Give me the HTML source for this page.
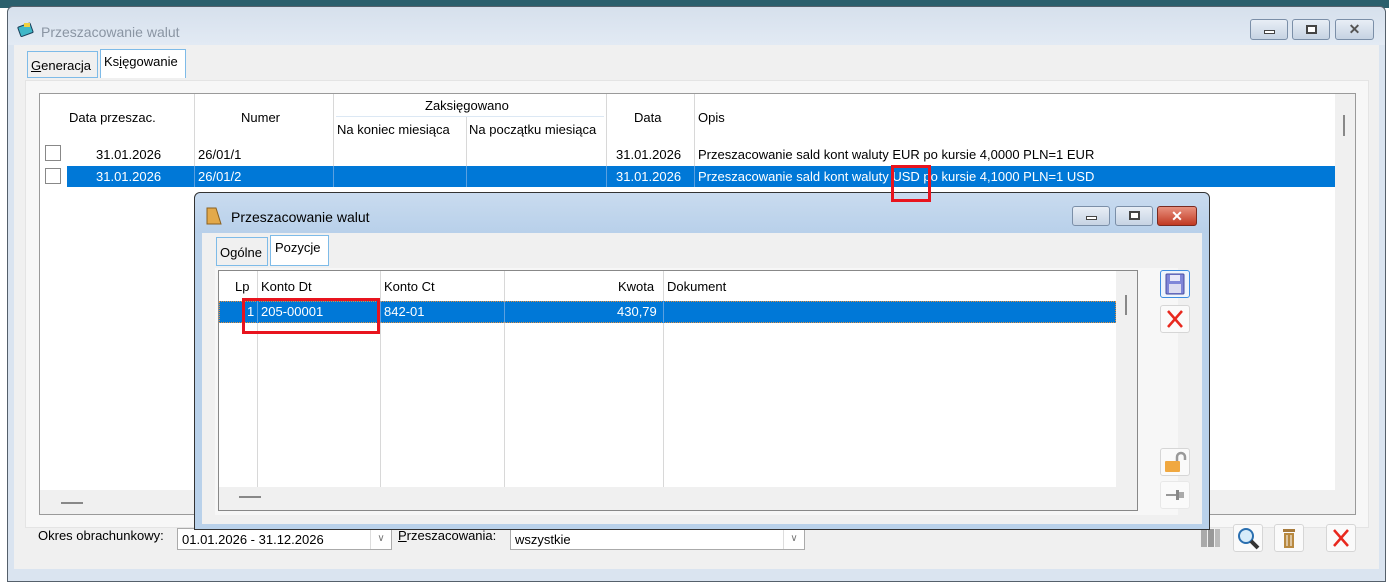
<!DOCTYPE html>
<html><head><meta charset="utf-8"><style>
*{margin:0;padding:0;box-sizing:border-box}
body{width:1389px;height:584px;overflow:hidden;background:#fff;font-family:"Liberation Sans",sans-serif;font-size:13px;color:#000;position:relative}
.a{position:absolute}
.t{position:absolute;white-space:nowrap;line-height:16px}
.vl{position:absolute;width:1px;background:#d8d8d8}
.sel{background:#0078d7;color:#fff}
.btn{position:absolute;border:1px solid #7b8fa8;border-radius:3px;background:linear-gradient(#e8eef6,#c6d3e3)}
.ib{position:absolute;width:30px;height:28px;border:1px solid #d6d6d6;border-radius:3px;background:#fafafa}
</style></head><body>
<div class="a" style="left:0;top:0;width:1389px;height:8px;background:#2b5f6c"></div>
<div class="a" style="left:7px;top:6px;width:1379px;height:576px;border:1px solid #55606b;border-radius:6px 6px 0 0;background:#dae4f0"></div>
<div class="a" style="left:8px;top:7px;width:1377px;height:38px;border-radius:6px 6px 0 0;background:linear-gradient(#d6e0ec,#e2eaf4)"></div>
<svg class="a" style="left:17px;top:22px" width="18" height="16"><rect x="2" y="3" width="13" height="10" rx="1" fill="#3fb7c8" stroke="#1a3f5a" transform="rotate(-20 8 8)"/><rect x="7" y="1" width="6" height="4" fill="#f0d040"/></svg>
<div class="t" style="left:41px;top:24px;color:#8a95a3;font-size:14px">Przeszacowanie walut</div>
<div class="btn" style="left:1250px;top:19px;width:38px;height:21px"><div class="a" style="left:13px;top:10px;width:11px;height:4px;border:1px solid #444;background:#fff"></div></div>
<div class="btn" style="left:1292px;top:19px;width:38px;height:21px"><div class="a" style="left:13px;top:5px;width:11px;height:9px;border:2px solid #444;background:#fff"></div></div>
<div class="btn" style="left:1335px;top:19px;width:39px;height:21px;text-align:center;font-weight:bold;color:#555;line-height:19px;font-size:14px">✕</div>
<div class="a" style="left:14px;top:45px;width:1365px;height:524px;background:#f0f0f0"></div>
<div class="a" style="left:25px;top:80px;width:1344px;height:448px;background:#f7f7f7;border:1px solid #e4e4e4"></div>
<div class="a" style="left:27px;top:51px;width:71px;height:27px;border:1px solid #7ebbe8;background:#f0f0f0"></div>
<div class="t" style="left:31px;top:58px"><u>G</u>eneracja</div>
<div class="a" style="left:100px;top:49px;width:86px;height:29px;border:1px solid #7ebbe8;border-bottom:none;background:#fff"></div>
<div class="t" style="left:104px;top:54px">Ks<u>i</u>ęgowanie</div>
<div class="a" style="left:39px;top:93px;width:1317px;height:422px;border:1px solid #9a9a9a;background:#fff"></div>
<div class="a" style="left:40px;top:490px;width:1295px;height:24px;background:#f0f0f0"></div>
<div class="a" style="left:61px;top:502px;width:22px;height:2px;background:#888"></div>
<div class="a" style="left:1335px;top:94px;width:20px;height:420px;background:#f0f0f0"></div>
<div class="a" style="left:1343px;top:115px;width:2px;height:21px;background:#888"></div>
<div class="vl" style="left:194px;top:94px;height:93px"></div>
<div class="vl" style="left:333px;top:94px;height:93px"></div>
<div class="vl" style="left:466px;top:116px;height:71px"></div>
<div class="vl" style="left:606px;top:94px;height:93px"></div>
<div class="vl" style="left:694px;top:94px;height:93px"></div>
<div class="a" style="left:336px;top:116px;width:268px;height:1px;background:#dce8f4"></div>
<div class="t" style="left:69px;top:110px">Data przeszac.</div>
<div class="t" style="left:241px;top:110px">Numer</div>
<div class="t" style="left:425px;top:98px">Zaksięgowano</div>
<div class="t" style="left:337px;top:122px">Na koniec miesiąca</div>
<div class="t" style="left:469px;top:122px">Na początku miesiąca</div>
<div class="t" style="left:634px;top:110px">Data</div>
<div class="t" style="left:698px;top:110px">Opis</div>
<div class="a" style="left:45px;top:145px;width:16px;height:16px;border:1px solid #888;background:#fff"></div>
<div class="a" style="left:45px;top:168px;width:16px;height:16px;border:1px solid #888;background:#fff"></div>
<div class="t" style="left:96px;top:147px">31.01.2026</div>
<div class="t" style="left:198px;top:147px">26/01/1</div>
<div class="t" style="left:616px;top:147px">31.01.2026</div>
<div class="t" style="left:698px;top:147px">Przeszacowanie sald kont waluty EUR po kursie 4,0000 PLN=1 EUR</div>
<div class="a sel" style="left:67px;top:166px;width:1268px;height:21px"></div>
<div class="a" style="left:194px;top:166px;width:1px;height:21px;background:#5aa0e0"></div>
<div class="a" style="left:333px;top:166px;width:1px;height:21px;background:#5aa0e0"></div>
<div class="a" style="left:466px;top:166px;width:1px;height:21px;background:#5aa0e0"></div>
<div class="a" style="left:606px;top:166px;width:1px;height:21px;background:#5aa0e0"></div>
<div class="a" style="left:694px;top:166px;width:1px;height:21px;background:#5aa0e0"></div>
<div class="t" style="left:96px;top:169px;color:#fff">31.01.2026</div>
<div class="t" style="left:198px;top:169px;color:#fff">26/01/2</div>
<div class="t" style="left:616px;top:169px;color:#fff">31.01.2026</div>
<div class="t" style="left:698px;top:169px;color:#fff">Przeszacowanie sald kont waluty USD po kursie 4,1000 PLN=1 USD</div>
<div class="a" style="left:891px;top:165px;width:40px;height:37px;border:3px solid #e8141e;z-index:20"></div>
<div class="t" style="left:38px;top:528px;font-size:13px">Okres obrachunkowy:</div>
<div class="a" style="left:177px;top:528px;width:215px;height:22px;border:1px solid #aaa;background:#fff"></div>
<div class="t" style="left:182px;top:532px">01.01.2026 - 31.12.2026</div>
<div class="a" style="left:370px;top:529px;width:21px;height:20px;border-left:1px solid #ddd;text-align:center;color:#777;font-size:10px;line-height:20px">∨</div>
<div class="t" style="left:398px;top:528px"><u>P</u>rzeszacowania:</div>
<div class="a" style="left:510px;top:528px;width:295px;height:22px;border:1px solid #aaa;background:#fff"></div>
<div class="t" style="left:515px;top:532px">wszystkie</div>
<div class="a" style="left:783px;top:529px;width:21px;height:20px;border-left:1px solid #ddd;text-align:center;color:#777;font-size:10px;line-height:20px">∨</div>
<div class="ib" style="left:1197px;top:524px;border:none;background:none"><div class="a" style="left:4px;top:5px;width:6px;height:18px;background:#aaa"></div><div class="a" style="left:11px;top:5px;width:6px;height:18px;background:#999"></div><div class="a" style="left:18px;top:5px;width:5px;height:18px;background:#bbb"></div></div>
<div class="ib" style="left:1233px;top:524px"><svg width="28" height="26"><circle cx="12" cy="11" r="7" fill="#d8ecfa" stroke="#2a6fb0" stroke-width="2"/><path d="M17 16l7 7" stroke="#333" stroke-width="4"/></svg></div>
<div class="ib" style="left:1274px;top:524px"><svg width="28" height="26"><rect x="8" y="4" width="12" height="3" fill="#a87b3c"/><rect x="9" y="8" width="10" height="15" fill="#b88940"/><path d="M12 10v11M16 10v11" stroke="#fff"/></svg></div>
<div class="ib" style="left:1326px;top:524px"><svg width="28" height="26"><path d="M7 5l14 16M21 5L7 21" stroke="#e8281e" stroke-width="2.5"/></svg></div>
<div class="a" style="left:194px;top:192px;width:1016px;height:338px;border:1px solid #333;border-radius:6px 6px 0 0;background:#b9d1ea;z-index:10">
 <div class="a" style="left:0;top:0;width:1014px;height:40px;border-radius:6px 6px 0 0;background:linear-gradient(#c9dbef,#b8d0ea)"></div>
 <svg class="a" style="left:11px;top:14px" width="16" height="18"><path d="M1 1h9l5 16H1z" fill="#e3a94a" stroke="#8a6020"/></svg>
 <div class="t" style="left:36px;top:16px;font-size:14px">Przeszacowanie walut</div>
 <div class="btn" style="left:877px;top:13px;width:38px;height:20px"><div class="a" style="left:13px;top:9px;width:11px;height:4px;border:1px solid #444;background:#fff"></div></div>
 <div class="btn" style="left:920px;top:13px;width:38px;height:20px"><div class="a" style="left:13px;top:4px;width:11px;height:9px;border:2px solid #444;background:#fff"></div></div>
 <div class="btn" style="left:962px;top:13px;width:40px;height:20px;background:linear-gradient(#e8917f,#c13a23);border-color:#7a2a20;text-align:center;color:#fff;font-weight:bold;line-height:18px;font-size:14px">✕</div>
 <div class="a" style="left:7px;top:40px;width:1000px;height:291px;background:#f0f0f0"></div>
 <div class="a" style="left:20px;top:75px;width:963px;height:247px;background:#f7f7f7"></div>
 <div class="a" style="left:21px;top:44px;width:52px;height:29px;border:1px solid #7ebbe8"></div>
 <div class="t" style="left:25px;top:52px">Ogólne</div>
 <div class="a" style="left:75px;top:42px;width:59px;height:31px;border:1px solid #7ebbe8;background:#fff"></div>
 <div class="t" style="left:80px;top:47px">Pozycje</div>
 <div class="a" style="left:23px;top:77px;width:920px;height:241px;border:1px solid #888;background:#fff"></div>
 <div class="a" style="left:24px;top:294px;width:897px;height:23px;background:#f0f0f0"></div>
 <div class="a" style="left:44px;top:303px;width:22px;height:2px;background:#888"></div>
 <div class="a" style="left:921px;top:78px;width:21px;height:239px;background:#f0f0f0"></div>
 <div class="a" style="left:930px;top:102px;width:2px;height:20px;background:#888"></div>
 <div class="vl" style="left:62px;top:78px;height:216px"></div>
 <div class="vl" style="left:185px;top:78px;height:216px"></div>
 <div class="vl" style="left:309px;top:78px;height:216px"></div>
 <div class="vl" style="left:468px;top:78px;height:216px"></div>
 <div class="t" style="left:40px;top:86px">Lp</div>
 <div class="t" style="left:66px;top:86px">Konto Dt</div>
 <div class="t" style="left:189px;top:86px">Konto Ct</div>
 <div class="t" style="left:423px;top:86px">Kwota</div>
 <div class="t" style="left:472px;top:86px">Dokument</div>
 <div class="a sel" style="left:24px;top:108px;width:897px;height:22px;border:1px dotted #e09040"></div>
 <div class="a" style="left:62px;top:108px;width:1px;height:22px;background:#5aa0e0"></div>
 <div class="a" style="left:185px;top:108px;width:1px;height:22px;background:#5aa0e0"></div>
 <div class="a" style="left:309px;top:108px;width:1px;height:22px;background:#5aa0e0"></div>
 <div class="a" style="left:468px;top:108px;width:1px;height:22px;background:#5aa0e0"></div>
 <div class="t" style="left:52px;top:111px;color:#fff">1</div>
 <div class="t" style="left:66px;top:111px;color:#fff">205-00001</div>
 <div class="t" style="left:189px;top:111px;color:#fff">842-01</div>
 <div class="t" style="left:422px;top:111px;color:#fff">430,79</div>
 <div class="a" style="left:47px;top:105px;width:138px;height:36px;border:3px solid #e8141e"></div>
 <div class="ib" style="left:965px;top:77px;border-color:#3d8ce0;background:#eef5fc"><svg width="28" height="26"><rect x="5" y="3" width="18" height="20" rx="1" fill="#7f86d8" stroke="#4a4fa0"/><rect x="9" y="4" width="10" height="6" fill="#e8e8f8"/><rect x="8" y="13" width="12" height="9" fill="#dcdcf0"/></svg></div>
 <div class="ib" style="left:965px;top:112px"><svg width="28" height="26"><path d="M7 5l14 16M21 5L7 21" stroke="#e8281e" stroke-width="2.5"/></svg></div>
 <div class="ib" style="left:965px;top:255px"><svg width="28" height="26"><path d="M16 12V8a4 4 0 0 1 8 0v3" fill="none" stroke="#999" stroke-width="2.5"/><rect x="4" y="12" width="15" height="11" rx="1" fill="#f0a840"/></svg></div>
 <div class="ib" style="left:965px;top:288px;border-color:#e8e8e8"><svg width="28" height="26"><path d="M5 13h10" stroke="#777" stroke-width="1.5"/><rect x="15" y="8" width="3" height="10" fill="#888"/><rect x="18" y="10" width="5" height="6" fill="#aaa"/></svg></div>
</div>
</body></html>
